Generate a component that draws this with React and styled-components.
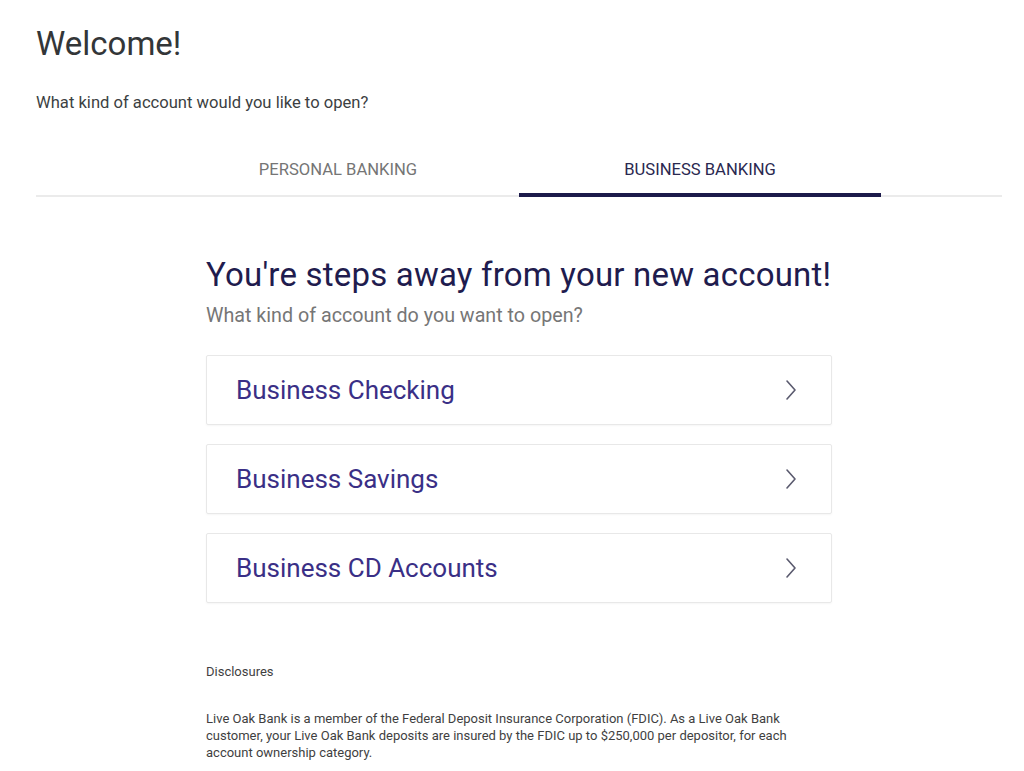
import styled, { createGlobalStyle } from 'styled-components';

const GlobalStyle = createGlobalStyle`
    body {
        margin: 0;
        background: #ffffff;
        font-family: Roboto, 'Liberation Sans', sans-serif;
    }
`

const Page = styled.div`
    padding: 0 22px 0 36px;
`

const Welcome = styled.h1`
    color: #333638;
    font-size: 33px;
    font-weight: 400;
    line-height: 36px;
    margin: 0;
    padding-top: 26px;
`

const Lead = styled.p`
    color: #3c3f42;
    font-size: 16.6px;
    line-height: 20px;
    margin: 31px 0 0;
`

const TabBar = styled.div`
    border-bottom: 2px solid #ebebeb;
    display: flex;
    justify-content: center;
    margin-top: 44px;
`

const TabButton = styled.button`
    background: none;
    border: none;
    border-bottom: 4px solid ${p => p.$active ? '#1c1a4a' : 'transparent'};
    color: ${p => p.$active ? '#2a2850' : '#757575'};
    cursor: pointer;
    font-family: inherit;
    font-size: 16.6px;
    height: 40px;
    margin-bottom: -2px;
    padding: 0 0 12px;
    text-transform: uppercase;
    width: 362px;
`

const Content = styled.section`
    margin: 0 auto;
    padding-top: 58px;
    width: 626px;
`

const Heading = styled.h2`
    color: #1f1c4e;
    font-size: 33px;
    font-weight: 400;
    letter-spacing: 0.2px;
    line-height: 40px;
    margin: 0;
    white-space: nowrap;
`

const SubHeading = styled.p`
    color: #767676;
    font-size: 19.7px;
    line-height: 24px;
    margin: 9px 0 0;
`

const CardList = styled.div`
    display: flex;
    flex-direction: column;
    gap: 19px;
    margin-top: 27px;
`

const Card = styled.a`
    align-items: center;
    border: 1px solid #e8e8e8;
    border-radius: 2px;
    box-shadow: 0 1px 2px rgba(0, 0, 0, 0.04);
    box-sizing: border-box;
    color: #3a2f86;
    cursor: pointer;
    display: flex;
    font-size: 26px;
    height: 70px;
    justify-content: space-between;
    padding: 0 33px 0 29px;
    text-decoration: none;
`

const Chevron = () => (
    <svg width="14" height="22" viewBox="0 0 14 22" fill="none">
        <path d="M3 2 L11 11 L3 20" stroke="#5a5a6e" strokeWidth="1.6" strokeLinecap="round" strokeLinejoin="round" />
    </svg>
)

const Disclosures = styled.div`
    color: #3f3f3f;
    font-size: 13px;
    line-height: 17px;
    margin-top: 60px;
    h4 {
        font-size: 13px;
        font-weight: 400;
        margin: 0;
    }
    p {
        margin: 30px 0 0;
        width: 595px;
    }
`

const accounts = ['Business Checking', 'Business Savings', 'Business CD Accounts']

export default function App(){
    return(
        <Page>
            <GlobalStyle />
            <Welcome>Welcome!</Welcome>
            <Lead>What kind of account would you like to open?</Lead>
            <TabBar>
                <TabButton>Personal Banking</TabButton>
                <TabButton $active>Business Banking</TabButton>
            </TabBar>
            <Content>
                <Heading>You're steps away from your new account!</Heading>
                <SubHeading>What kind of account do you want to open?</SubHeading>
                <CardList>
                    {accounts.map(name => (
                        <Card key={name}>
                            {name}
                            <Chevron />
                        </Card>
                    ))}
                </CardList>
                <Disclosures>
                    <h4>Disclosures</h4>
                    <p>Live Oak Bank is a member of the Federal Deposit Insurance Corporation (FDIC). As a Live Oak Bank customer, your Live Oak Bank deposits are insured by the FDIC up to $250,000 per depositor, for each account ownership category.</p>
                </Disclosures>
            </Content>
        </Page>
    )
}
